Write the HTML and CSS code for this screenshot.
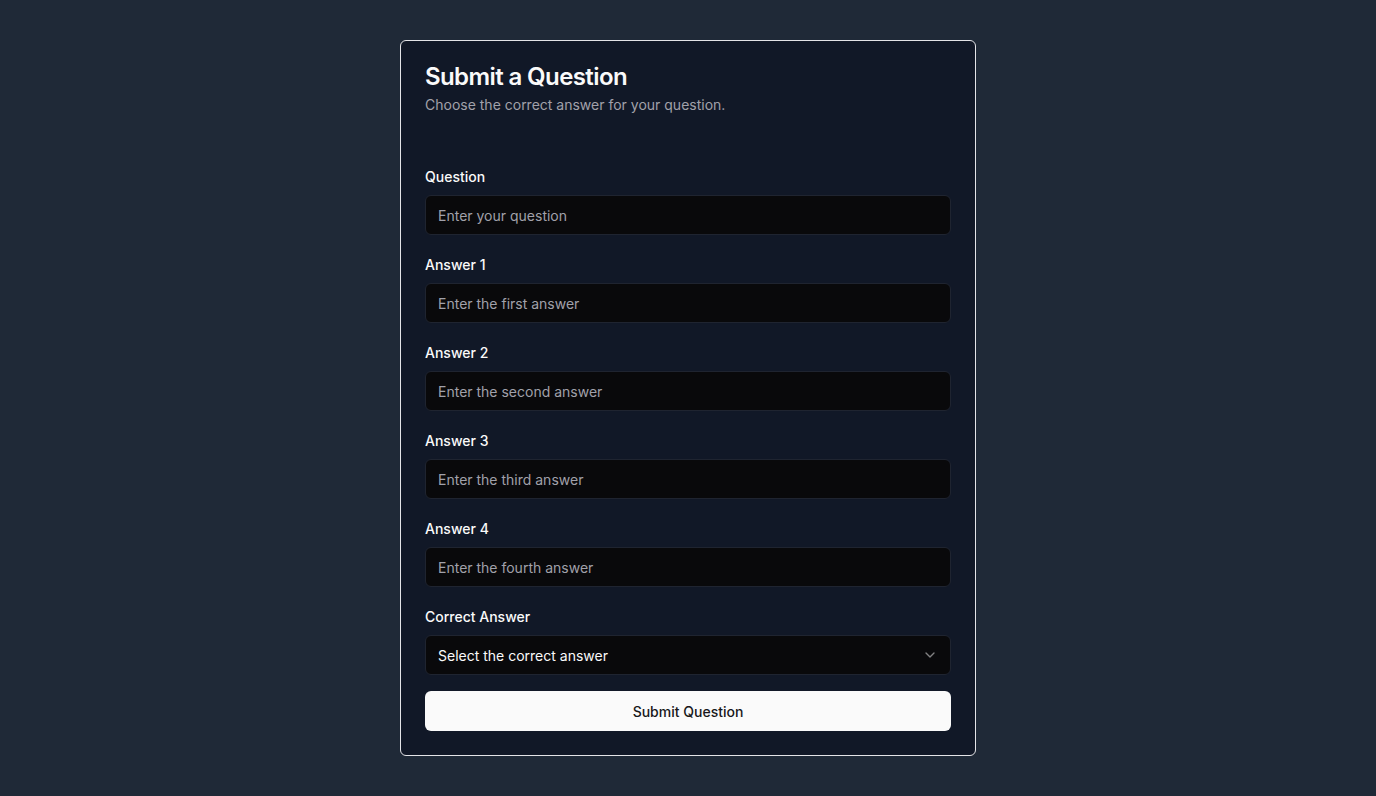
FILE: index.html
```html
<!DOCTYPE html>
<html lang="en">
<head>
<meta charset="utf-8">
<title>Submit a Question</title>
<link rel="stylesheet" href="styles.css">
</head>
<body>
<main class="page">
  <section class="card">
    <header class="card-header">
      <h1 class="card-title">Submit a Question</h1>
      <p class="card-desc">Choose the correct answer for your question.</p>
    </header>
    <form class="form">
      <div class="field">
        <label class="label" for="q">Question</label>
        <input class="input" id="q" type="text" placeholder="Enter your question">
      </div>
      <div class="field">
        <label class="label" for="a1">Answer 1</label>
        <input class="input" id="a1" type="text" placeholder="Enter the first answer">
      </div>
      <div class="field">
        <label class="label" for="a2">Answer 2</label>
        <input class="input" id="a2" type="text" placeholder="Enter the second answer">
      </div>
      <div class="field">
        <label class="label" for="a3">Answer 3</label>
        <input class="input" id="a3" type="text" placeholder="Enter the third answer">
      </div>
      <div class="field">
        <label class="label" for="a4">Answer 4</label>
        <input class="input" id="a4" type="text" placeholder="Enter the fourth answer">
      </div>
      <div class="field">
        <span class="label">Correct Answer</span>
        <button type="button" class="select">
          <span>Select the correct answer</span>
          <svg class="chev" width="16" height="16" viewBox="0 0 24 24" fill="none" stroke="currentColor" stroke-width="2" stroke-linecap="round" stroke-linejoin="round"><path d="m6 9 6 6 6-6"/></svg>
        </button>
      </div>
      <button type="submit" class="submit">Submit Question</button>
    </form>
  </section>
</main>
</body>
</html>
```
FILE: styles.css
```css
* { box-sizing: border-box; }
html, body { margin: 0; padding: 0; }
body {
  background: #1f2937;
  font-family: Inter, "Noto Sans", sans-serif;
  color: #fafafa;
  min-height: 796px;
}
.page {
  display: flex;
  justify-content: center;
  padding-top: 40px;
}
.card {
  width: 576px;
  background: #111827;
  border: 1px solid #e4e4e7;
  border-radius: 6px;
  padding: 24px;
}
.card-header {
  display: flex;
  flex-direction: column;
  gap: 6px;
}
.card-title {
  margin: 0;
  font-size: 24px;
  line-height: 24px;
  font-weight: 600;
  letter-spacing: -0.6px;
  color: #fafafa;
}
.card-desc {
  margin: 0;
  font-size: 14px;
  line-height: 20px;
  color: #a1a1aa;
}
.form {
  display: flex;
  flex-direction: column;
  gap: 20px;
  padding-top: 52px;
}
.field {
  display: flex;
  flex-direction: column;
  gap: 8px;
}
.label {
  font-size: 14px;
  line-height: 20px;
  font-weight: 500;
  color: #fafafa;
}
.input, .select {
  height: 40px;
  width: 100%;
  background: #09090b;
  border: 1px solid #1f2430;
  border-radius: 6px;
  padding: 0 12px;
  font-family: inherit;
  font-size: 14px;
  color: #fafafa;
  outline: none;
}
.input::placeholder { color: #a1a1aa; opacity: 1; }
.select {
  display: flex;
  align-items: center;
  justify-content: space-between;
  text-align: left;
  cursor: pointer;
}
.chev { color: #fafafa; opacity: 0.5; }
.submit {
  margin-top: -4px;
  height: 40px;
  width: 100%;
  background: #fafafa;
  color: #18181b;
  border: none;
  border-radius: 6px;
  font-family: inherit;
  font-size: 14px;
  font-weight: 500;
  cursor: pointer;
}
```
